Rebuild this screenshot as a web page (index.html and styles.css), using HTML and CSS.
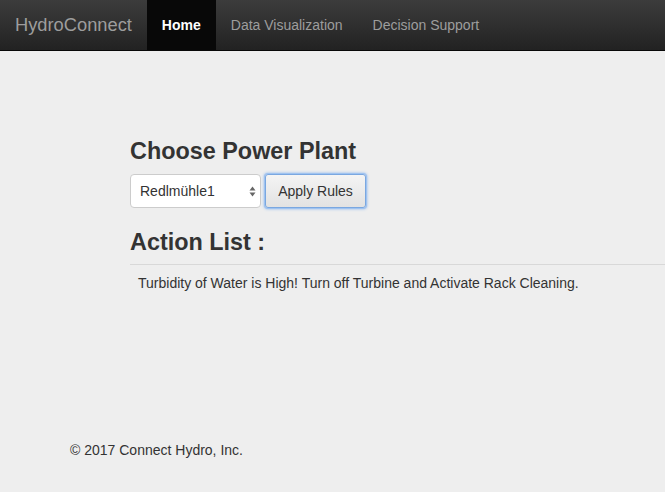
FILE: index.html
```
<!DOCTYPE html>
<html>
<head>
<meta charset="utf-8">
<link rel="stylesheet" href="styles.css">
</head>
<body>
<nav class="navbar">
  <a class="brand">HydroConnect</a>
  <ul class="nav">
    <li class="active"><a>Home</a></li>
    <li><a>Data Visualization</a></li>
    <li><a>Decision Support</a></li>
  </ul>
</nav>
<main class="content">
  <h3 class="title">Choose Power Plant</h3>
  <div class="form-row">
    <div class="select"><span>Redlmühle1</span><svg class="arrows" width="7" height="11" viewBox="0 0 7 11"><path d="M3.5 0.5 L6.5 4.5 L0.5 4.5 Z M3.5 10.5 L6.5 6.5 L0.5 6.5 Z" fill="#666"/></svg></div>
    <button class="btn">Apply Rules</button>
  </div>
  <h3 class="title action-title">Action List :</h3>
  <hr class="rule">
  <p class="action">Turbidity of Water is High! Turn off Turbine and Activate Rack Cleaning.</p>
</main>
<footer class="footer">© 2017 Connect Hydro, Inc.</footer>
</body>
</html>
```
FILE: styles.css
```
html, body {
  margin: 0;
  padding: 0;
}
body {
  background: #eeeeee;
  font-family: "Liberation Sans", Arial, sans-serif;
  font-size: 14px;
  color: #333;
  height: 492px;
  overflow: hidden;
}
.navbar {
  height: 50px;
  display: flex;
  align-items: stretch;
  background: linear-gradient(to bottom, #3c3c3c 0%, #222222 100%);
  border-bottom: 1px solid #080808;
}
.brand {
  display: flex;
  align-items: center;
  padding: 0 15px;
  font-size: 18.3px;
  color: #9d9d9d;
}
.nav {
  list-style: none;
  margin: 0;
  padding: 0;
  display: flex;
}
.nav li a {
  display: flex;
  align-items: center;
  height: 50px;
  padding: 0 15px;
  color: #9d9d9d;
  font-size: 14px;
}
.nav li.active a {
  background: #080808;
  color: #fff;
  font-weight: bold;
}
.content {
  padding: 87px 0 0 130px;
}
.title {
  margin: 0;
  font-size: 23.4px;
  line-height: 26px;
  font-weight: bold;
  color: #333;
}
.form-row {
  display: flex;
  gap: 4px;
  margin-top: 10px;
}
.select {
  width: 131px;
  height: 34px;
  box-sizing: border-box;
  background: #fff;
  border: 1px solid #ccc;
  border-radius: 4px;
  display: flex;
  align-items: center;
  justify-content: space-between;
  padding: 0 4px 0 9px;
  font-size: 14px;
  color: #333;
}
.btn {
  width: 101px;
  height: 34px;
  box-sizing: border-box;
  font-family: inherit;
  font-size: 14px;
  color: #333;
  background: linear-gradient(to bottom, #f4f4f4, #e2e2e2);
  border: 1px solid #7aa7e0;
  border-radius: 3px;
  box-shadow: 0 0 0 1px #9fc3f0, 0 0 3px 1px #8bb6ee;
  padding: 0;
}
.action-title {
  margin-top: 21px;
}
.rule {
  margin: 9px 0 0 0;
  border: 0;
  border-top: 1px solid #d8d8d8;
}
.action {
  margin: 8px 0 0 8px;
  line-height: 20px;
}
.footer {
  padding: 0 0 0 70px;
  margin-top: 147px;
  line-height: 20px;
}
```
